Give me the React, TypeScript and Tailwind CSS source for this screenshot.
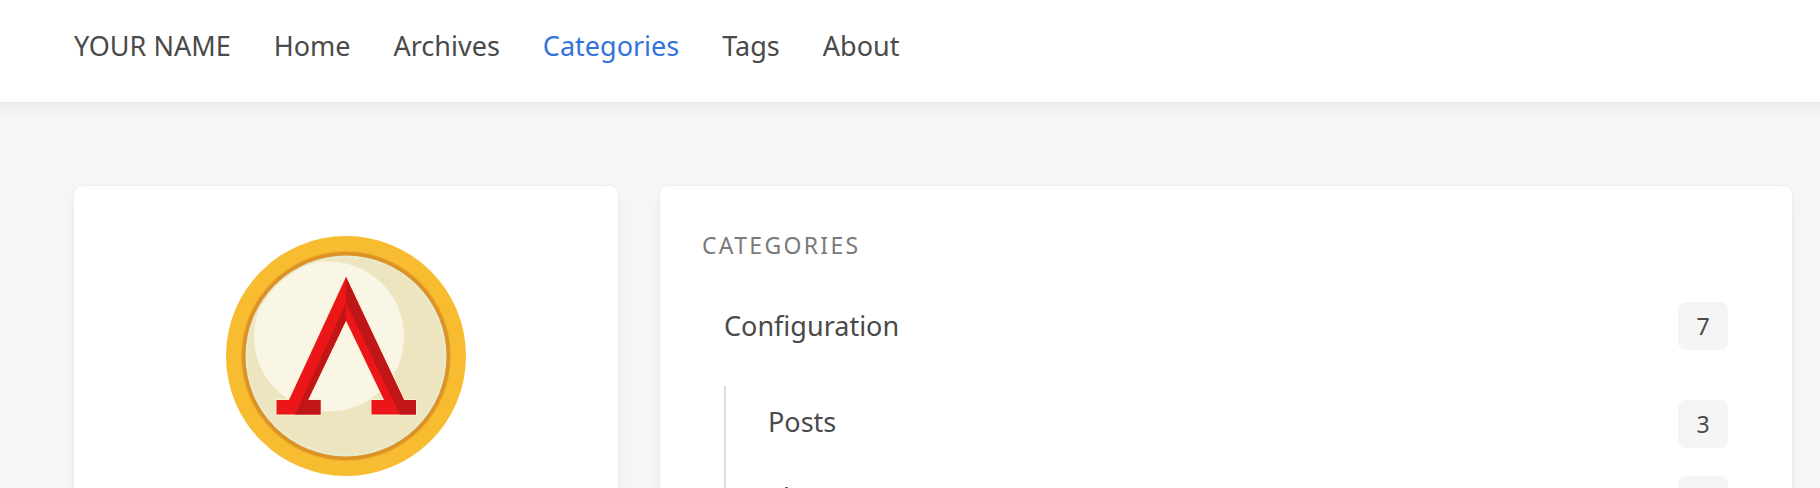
const links = ['Home', 'Archives', 'Categories', 'Tags', 'About'];

const children = [
  { name: 'Posts', count: 3 },
  { name: 'Theme', count: 3 },
];

function Row({ name, count, nested = false }: { name: string; count: number; nested?: boolean }) {
  return (
    <a href="#" className="flex items-start justify-between px-[22px] py-[14px]">
      <span className={nested ? 'text-[27px] leading-[44px]' : 'text-[27px] leading-[48px]'}>{name}</span>
      <span className="flex h-[48px] w-[50px] items-center justify-center rounded-lg bg-[#f5f5f5] text-[23px] leading-[48px]">
        {count}
      </span>
    </a>
  );
}

function Coin() {
  return (
    <svg viewBox="0 0 240 240" className="size-60" role="img" aria-label="Logo">
      <defs>
        <clipPath id="disc">
          <circle cx="120" cy="120" r="98.500" />
        </clipPath>
      </defs>
      <circle cx="120" cy="120" r="120" fill="#f7bc30" />
      <circle cx="120" cy="120" r="105" fill="#eba92b" />
      <circle cx="120" cy="120" r="104" fill="#dc9226" />
      <circle cx="120" cy="120" r="100.500" fill="#e9ebcf" />
      <circle cx="120" cy="120" r="98.500" fill="#ede5c0" />
      <circle cx="103" cy="100.500" r="75" fill="#faf6e5" clipPath="url(#disc)" />
      <path
        d="M120 41 178 164H190V178.500H145.500V164H158L120 84.500 82 164H94.500V178.500H50.500V164H63Z"
        fill="#ec1518"
        stroke="#f5f1cf"
        strokeWidth="2"
        paintOrder="stroke"
      />
      <path d="M120 41 178 164H190V178.500H174L120 67ZM120 67V84.500L82 164H94.500V178.500H69Z" fill="#c01618" />
    </svg>
  );
}

export default function App() {
  return (
    <div className="h-screen overflow-hidden bg-[#f7f7f7] font-['Noto_Sans',sans-serif] text-[#4a4a4a]">
      <header className="relative -mx-8 bg-white px-8 shadow-[0_8px_20px_rgba(0,0,0,0.05),0_0_2px_rgba(0,0,0,0.1)]">
        <nav className="flex h-[102px] items-center gap-[43px] pr-7 pb-[10px] pl-[74px] text-[27px] leading-[42px]">
          <a href="#">YOUR NAME</a>
          {links.map((label) => (
            <a key={label} href="#" className={label === 'Categories' ? 'text-[#3273dc]' : ''}>
              {label}
            </a>
          ))}
        </nav>
      </header>
      <main className="grid grid-cols-[544fr_1132fr] gap-[42px] pt-[84px] pr-7 pl-[74px]">
        <aside className="flex justify-center rounded-lg bg-white py-[50px] shadow-[0_8px_20px_rgba(0,0,0,0.05),0_0_2px_rgba(0,0,0,0.1)]">
          <Coin />
        </aside>
        <section className="rounded-lg bg-white p-[42px] shadow-[0_8px_20px_rgba(0,0,0,0.05),0_0_2px_rgba(0,0,0,0.1)]">
          <h3 className="mb-[26px] text-[23px] leading-[34px] tracking-widest text-[#7a7a7a] uppercase">Categories</h3>
          <Row name="Configuration" count={7} />
          <div className="mt-[22px] ml-[22px] border-l-2 border-[#dbdbdb] pl-5">
            {children.map((item) => (
              <Row key={item.name} name={item.name} count={item.count} nested />
            ))}
          </div>
        </section>
      </main>
    </div>
  );
}
